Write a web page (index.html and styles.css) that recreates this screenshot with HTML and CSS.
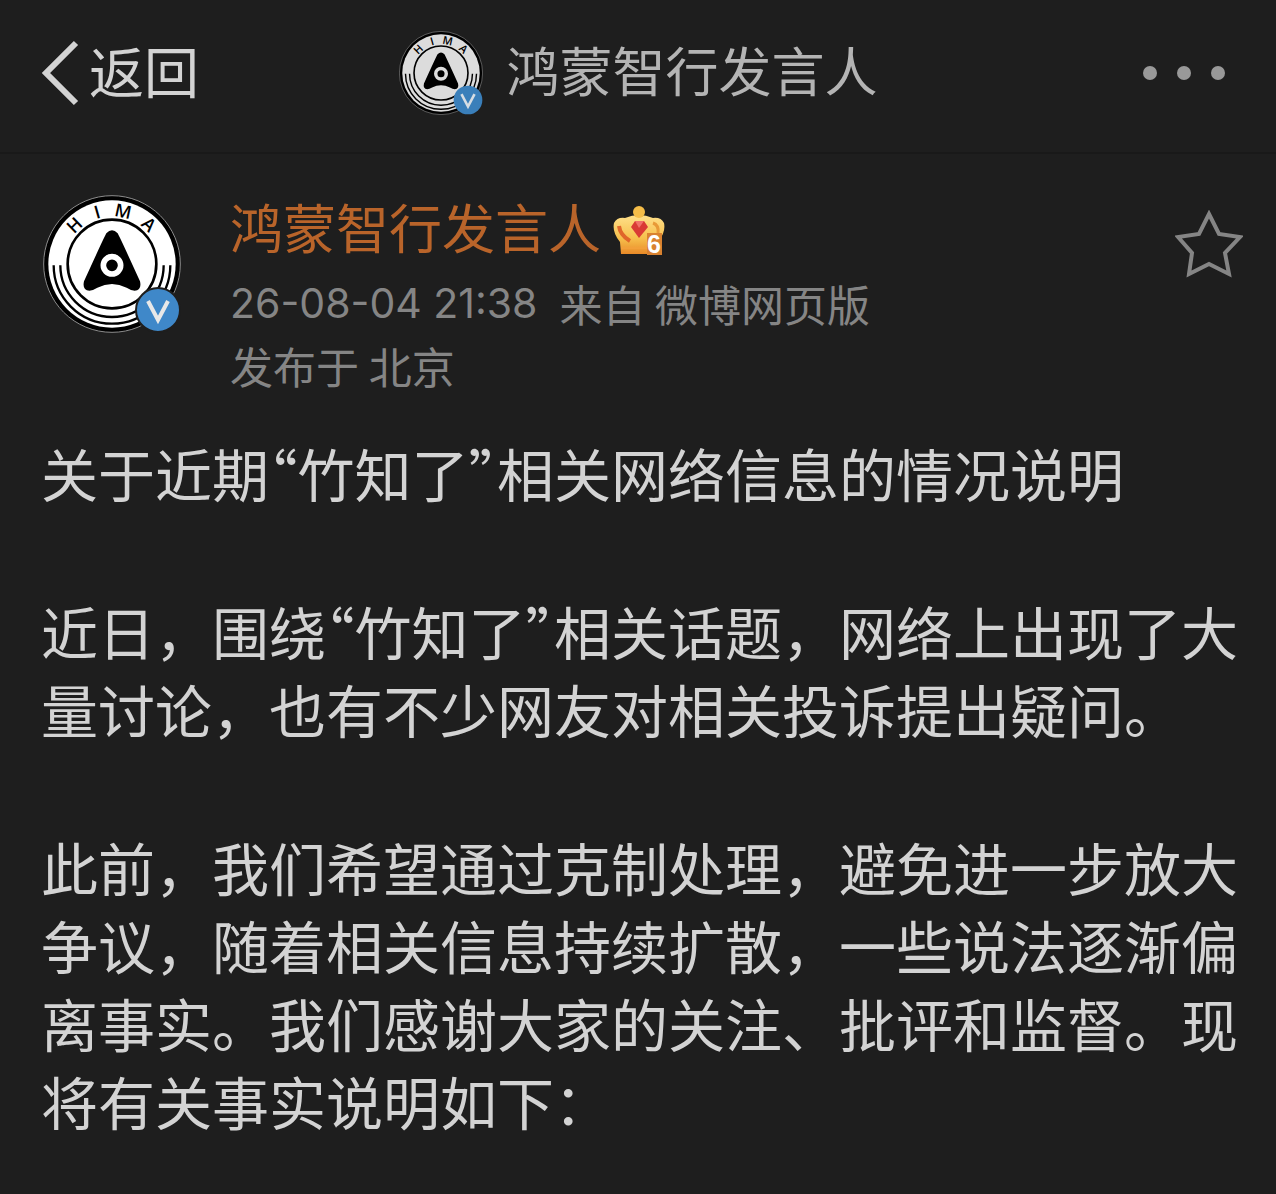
FILE: index.html
```
<!DOCTYPE html>
<html lang="zh-CN">
<head>
    <meta charset="UTF-8">
    <meta name="viewport" content="width=device-width, initial-scale=1.0">
    <title>鸿蒙智行发言人</title>
    <link rel="stylesheet" href="styles.css">
</head>
<body>
    <header class="navbar">
        <a class="back" href="#">
            <svg viewBox="0 0 38 66" aria-hidden="true"><path d="M35 3L5 33L35 63" fill="none" stroke="currentColor" stroke-width="6"/></svg>
            <span>返回</span>
        </a>
        <div class="nav-title">
            <div class="avatar avatar-small">
                <svg class="avatar-img" viewBox="-207 -207 414 414">
                    <circle r="205" fill="#000" stroke="#8c8c8c" stroke-width="3"/>
                    <circle r="191" fill="currentColor"/>
                    <g fill="none" stroke="#000" stroke-width="7">
                        <path d="M-175 4A175 175 0 0 0 175 4"/>
                        <path d="M-155 4A155 155 0 0 0 155 4"/>
                        <circle r="133" stroke-width="8"/>
                    </g>
                    <path d="M-17-92Q0-111 17-92Q24-80 84 52Q90 78 68 80Q58 80 44 71Q0 49-44 71Q-58 80-68 80Q-90 78-84 52Q-24-80-17-92Z"/>
                    <circle cy="4" r="26" stroke="currentColor" stroke-width="17"/>
                    <g class="hima-text">
                        <text y="-143" transform="rotate(-44)">H</text>
                        <text y="-143" transform="rotate(-16)">I</text>
                        <text y="-143" transform="rotate(12)">M</text>
                        <text y="-143" transform="rotate(43)">A</text>
                    </g>
                </svg>
                <svg class="badge" viewBox="0 0 46 46">
                    <circle cx="23" cy="23" r="22" fill="#3a7fba"/>
                    <path d="M13 14L23 33L33 14" fill="none" stroke="#d6dde3" stroke-width="4"/>
                </svg>
            </div>
            <span>鸿蒙智行发言人</span>
        </div>
        <button class="more" type="button" aria-label="更多">
            <i></i><i></i><i></i>
        </button>
    </header>

    <article class="post">
        <div class="author">
            <div class="avatar">
                <svg class="avatar-img" viewBox="-207 -207 414 414">
                    <circle r="205" fill="#000" stroke="#8c8c8c" stroke-width="3"/>
                    <circle r="191" fill="currentColor"/>
                    <g fill="none" stroke="#000" stroke-width="7">
                        <path d="M-175 4A175 175 0 0 0 175 4"/>
                        <path d="M-155 4A155 155 0 0 0 155 4"/>
                        <circle r="133" stroke-width="8"/>
                    </g>
                    <path d="M-17-92Q0-111 17-92Q24-80 84 52Q90 78 68 80Q58 80 44 71Q0 49-44 71Q-58 80-68 80Q-90 78-84 52Q-24-80-17-92Z"/>
                    <circle cy="4" r="26" stroke="currentColor" stroke-width="17"/>
                    <g class="hima-text">
                        <text y="-143" transform="rotate(-44)">H</text>
                        <text y="-143" transform="rotate(-16)">I</text>
                        <text y="-143" transform="rotate(12)">M</text>
                        <text y="-143" transform="rotate(43)">A</text>
                    </g>
                </svg>
                <svg class="badge" viewBox="0 0 46 46">
                    <circle cx="23" cy="23" r="22" fill="#3f88c9" stroke="#1e1e1e" stroke-width="2"/>
                    <path d="M13 14L23 33L33 14" fill="none" stroke="#e8e8e8" stroke-width="4"/>
                </svg>
            </div>
            <div class="info">
                <div class="name">
                    <a href="#">鸿蒙智行发言人</a>
                    <svg class="crown" viewBox="0 0 52 50" aria-hidden="true">
                        <defs>
                            <linearGradient id="gold" x1="0" y1="0" x2="0" y2="1">
                                <stop offset="0" stop-color="#ffe08a"/>
                                <stop offset="0.6" stop-color="#f6bf4c"/>
                                <stop offset="1" stop-color="#e98a28"/>
                            </linearGradient>
                        </defs>
                        <path d="M8 48L7 36Q-1 26 1 17Q4 11 12 12Q19 9 26 9Q33 9 40 12Q48 11 51 17Q53 26 45 36L44 48Z" fill="url(#gold)"/>
                        <path d="M6 20Q7 29 17 35" fill="none" stroke="#e0662a" stroke-width="4"/>
                        <path d="M40 17Q46 19 45 27" fill="none" stroke="#e89a38" stroke-width="3"/>
                        <path d="M8 42H36" stroke="#f2a03a" stroke-width="2"/>
                        <circle cx="26" cy="6" r="6" fill="#f5bd48"/>
                        <path d="M22 15H31L35 21L26 32L18 21Z" fill="#d93a35"/>
                        <path d="M22 15H31L26 22Z" fill="#f0706a"/>
                        <path d="M34 27H49V49H34Z" fill="#d98230"/>
                        <text x="41" y="47" text-anchor="middle">6</text>
                    </svg>
                </div>
                <div class="meta"><time>26-08-04 21:38</time><span>来自 微博网页版</span></div>
                <div class="meta">发布于 北京</div>
            </div>
            <button class="fav" type="button" aria-label="收藏">
                <svg viewBox="0 0 68 68"><path d="M34 4L44 24L65 27L50 43L54 64L34 54L14 64L17 43L3 27L24 24Z" fill="none" stroke="currentColor" stroke-width="4"/></svg>
            </button>
        </div>

        <div class="content">
            <p>关于近期<span class="quote">“</span>竹知了<span class="quote">”</span>相关网络信息的情况说明</p>
            <p>近日，围绕<span class="quote">“</span>竹知了<span class="quote">”</span>相关话题，网络上出现了大量讨论，也有不少网友对相关投诉提出疑问。</p>
            <p>此前，我们希望通过克制处理，避免进一步放大争议，随着相关信息持续扩散，一些说法逐渐偏离事实。我们感谢大家的关注、批评和监督。现将有关事实说明如下：</p>
        </div>
    </article>
</body>
</html>
```
FILE: styles.css
```
* {
    box-sizing: border-box;
}

body {
    margin: 0;
    background: #1e1e1e;
    color: #d3d3d3;
    font-family: "Noto Sans CJK SC", sans-serif;
}

a {
    color: inherit;
    text-decoration: none;
}

button {
    padding: 0;
    border: none;
    background: none;
    cursor: pointer;
}

svg {
    display: block;
}

.hima-text {
    font-family: "Open Sans", sans-serif;
    font-size: 54px;
    font-weight: 600;
    text-anchor: middle;
}

/* top bar */
.navbar {
    display: grid;
    grid-template-columns: 1fr auto 1fr;
    align-items: center;
    height: 154px;
    padding: 0 41px 6px;
    border-bottom: 2px solid #191919;
}

.navbar span {
    padding-bottom: 8px;
}

.back {
    display: flex;
    align-items: center;
    gap: 10px;
    font-size: 55px;
    line-height: 80px;
}

.back svg {
    width: 38px;
    height: 66px;
}

.nav-title {
    display: flex;
    align-items: center;
    gap: 24px;
    color: #b4b4b4;
    font-size: 53px;
    line-height: 80px;
}

.more {
    display: flex;
    gap: 20px;
    justify-self: end;
    margin-right: 10px;
}

.more i {
    width: 14px;
    height: 14px;
    border-radius: 50%;
    background: #999;
}

/* avatar */
.avatar {
    position: relative;
    width: 138px;
    height: 138px;
    color: #fff;
}

.avatar-img {
    width: 100%;
    height: 100%;
}

.badge {
    position: absolute;
    right: 0;
    bottom: 0;
    width: 46px;
    height: 46px;
}

.avatar-small {
    width: 84px;
    height: 84px;
    color: #dcdcdc;
}

.avatar-small .badge {
    width: 30px;
    height: 30px;
}

/* post */
.post {
    padding: 41px 36px 44px 41px;
}

.author {
    display: flex;
    align-items: flex-start;
    margin: 0 -3px 0 2px;
}

.info {
    flex: 1;
    margin: -5px 0 0 49px;
}

.name {
    display: flex;
    align-items: center;
    gap: 12px;
    color: #b9642a;
    font-size: 53px;
    line-height: 72px;
}

.name a {
    padding-bottom: 10px;
}

.crown {
    width: 52px;
    height: 50px;
}

.crown text {
    fill: #fff;
    font-family: "Liberation Sans", sans-serif;
    font-size: 25px;
    font-weight: bold;
}

.meta {
    display: flex;
    gap: 22px;
    color: #858585;
    font-size: 43px;
    line-height: 62px;
}

.meta time {
    font-family: Inter, sans-serif;
    font-size: 41px;
}

.fav {
    margin-top: 15px;
    color: #858585;
}

.fav svg {
    width: 68px;
    height: 68px;
}

.content {
    margin-top: 37px;
    font-size: 57px;
    line-height: 78px;
}

.content p {
    margin: 0 0 80px;
}

.content p:last-child {
    margin-bottom: 0;
}

.quote {
    font-feature-settings: "halt";
}
```
